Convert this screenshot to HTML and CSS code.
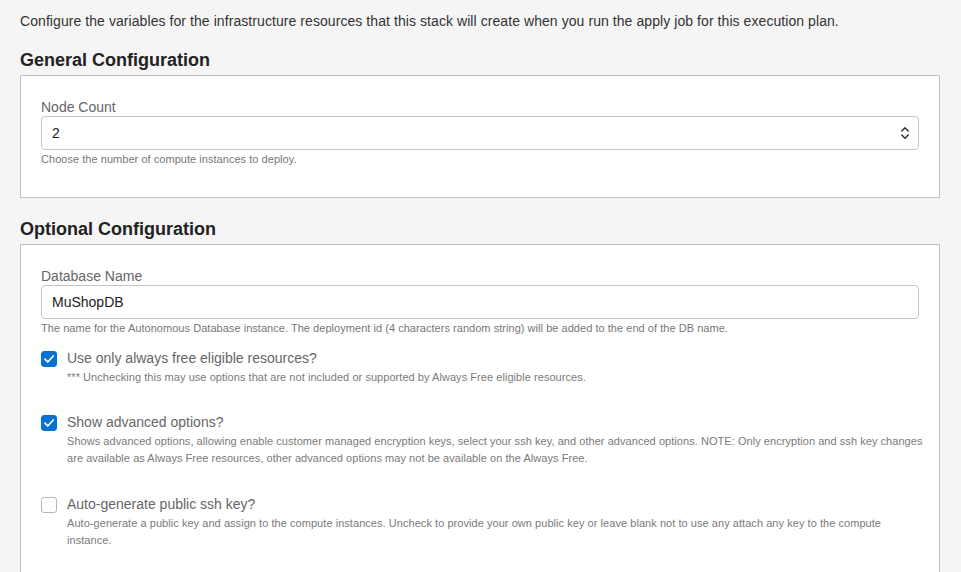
FILE: index.html
```html
<!DOCTYPE html>
<html lang="en">
<head>
<meta charset="utf-8">
<title>Configure variables</title>
<link rel="stylesheet" href="styles.css">
</head>
<body>
<p class="intro">Configure the variables for the infrastructure resources that this stack will create when you run the apply job for this execution plan.</p>

<h2 class="section-title">General Configuration</h2>
<div class="panel panel-general">
  <label class="field-label">Node Count</label>
  <div class="select">
    <span class="select-value">2</span>
    <svg class="select-arrows" width="12" height="16" viewBox="0 0 12 16" aria-hidden="true">
      <path d="M2.8 6 L6 2.8 L9.2 6" fill="none" stroke="#333" stroke-width="1.5" stroke-linecap="round" stroke-linejoin="round"/>
      <path d="M2.8 10 L6 13.2 L9.2 10" fill="none" stroke="#333" stroke-width="1.5" stroke-linecap="round" stroke-linejoin="round"/>
    </svg>
  </div>
  <p class="help">Choose the number of compute instances to deploy.</p>
</div>

<h2 class="section-title">Optional Configuration</h2>
<div class="panel panel-optional">
  <label class="field-label">Database Name</label>
  <div class="input"><span class="input-value">MuShopDB</span></div>
  <p class="help">The name for the Autonomous Database instance. The deployment id (4 characters random string) will be added to the end of the DB name.</p>

  <div class="check-row first">
    <span class="checkbox checked">
      <svg width="16" height="16" viewBox="0 0 16 16" aria-hidden="true"><path d="M4 8.2 L6.8 11 L12.2 5" fill="none" stroke="#fff" stroke-width="1.7" stroke-linecap="round" stroke-linejoin="round"/></svg>
    </span>
    <div class="check-text">
      <div class="check-label">Use only always free eligible resources?</div>
      <div class="check-help">*** Unchecking this may use options that are not included or supported by Always Free eligible resources.</div>
    </div>
  </div>

  <div class="check-row second">
    <span class="checkbox checked">
      <svg width="16" height="16" viewBox="0 0 16 16" aria-hidden="true"><path d="M4 8.2 L6.8 11 L12.2 5" fill="none" stroke="#fff" stroke-width="1.7" stroke-linecap="round" stroke-linejoin="round"/></svg>
    </span>
    <div class="check-text">
      <div class="check-label">Show advanced options?</div>
      <div class="check-help">Shows advanced options, allowing enable customer managed encryption keys, select your ssh key, and other advanced options. NOTE: Only encryption and ssh key changes<br>are available as Always Free resources, other advanced options may not be available on the Always Free.</div>
    </div>
  </div>

  <div class="check-row third">
    <span class="checkbox"></span>
    <div class="check-text">
      <div class="check-label">Auto-generate public ssh key?</div>
      <div class="check-help">Auto-generate a public key and assign to the compute instances. Uncheck to provide your own public key or leave blank not to use any attach any key to the compute<br>instance.</div>
    </div>
  </div>
</div>
</body>
</html>
```

FILE: styles.css
```css
* { box-sizing: border-box; }

html, body {
  margin: 0;
  background: #f5f5f5;
}

body {
  padding: 13px 21px 0 20px;
  font-family: "Liberation Sans", Arial, Helvetica, sans-serif;
  color: #333;
  overflow: hidden;
}

.intro {
  margin: 0;
  font-size: 14px;
  line-height: 17px;
  letter-spacing: 0.07px;
  color: #333;
}

.section-title {
  margin: 19px 0 4px;
  font-size: 18px;
  line-height: 22px;
  font-weight: bold;
  color: #222;
}

.panel + .section-title {
  margin-top: 20px;
}

.panel {
  background: #fff;
  border: 1px solid #bcbfc5;
  padding: 23px 20px 31px 20px;
}

.panel-optional {
  padding-bottom: 60px;
}

.field-label {
  display: block;
  font-size: 14px;
  line-height: 17px;
  color: #666;
}

.select, .input {
  height: 34px;
  border: 1px solid #c3c6cc;
  border-radius: 4px;
  background: #fff;
  display: flex;
  align-items: center;
  padding: 0 10px;
  font-size: 14px;
  color: #222;
}

.select {
  justify-content: space-between;
}

.select-value, .input-value {
  line-height: 17px;
}

.select-arrows {
  display: block;
  margin-right: -3px;
}

.help {
  margin: 2px 0 0;
  font-size: 11px;
  line-height: 14px;
  letter-spacing: 0.04px;
  color: #777;
}

.check-row {
  display: flex;
  align-items: flex-start;
  gap: 10px;
}

.check-row.first {
  margin-top: 15px;
}

.check-row.second {
  margin-top: 28px;
}

.check-row.third {
  margin-top: 29px;
}

.checkbox {
  flex: none;
  width: 16px;
  height: 16px;
  margin-top: 1px;
  border: 1px solid #b3b7be;
  border-radius: 3px;
  background: #fff;
  display: flex;
  align-items: center;
  justify-content: center;
}

.checkbox.checked {
  background: #0a71d0;
  border-color: #0a71d0;
}

.checkbox svg {
  display: block;
  margin: -1px;
}

.check-label {
  font-size: 14px;
  line-height: 17px;
  color: #666;
}

.check-help {
  margin-top: 2px;
  font-size: 11px;
  line-height: 17px;
  letter-spacing: 0.05px;
  color: #7a7a7a;
  white-space: nowrap;
}
```
